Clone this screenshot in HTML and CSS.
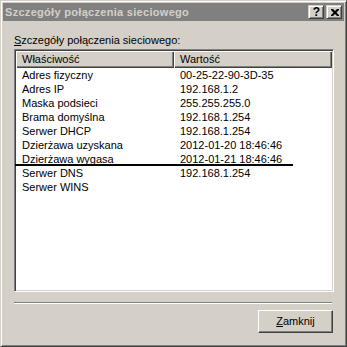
FILE: index.html
```html
<!DOCTYPE html>
<html lang="pl">
<head>
<meta charset="utf-8">
<title>Szczegóły połączenia sieciowego</title>
<link rel="stylesheet" href="styles.css">
</head>
<body>
<div class="window">
  <div class="titlebar">
    <span class="title">Szczegóły połączenia sieciowego</span>
    <div class="tbtns">
      <div class="tb tb-help">?</div>
      <div class="tb tb-close">
        <svg width="8" height="7" viewBox="0 0 8 7"><path d="M0 0h2l2 2 2-2h2v1l-2.5 2.5L8 6v1H6L4 5 2 7H0V6l2.5-2.5L0 1z" fill="#000"/></svg>
      </div>
    </div>
  </div>
  <div class="content">
    <div class="label"><u>S</u>zczegóły połączenia sieciowego:</div>
    <div class="list">
      <div class="header">
        <div class="hcell">Właściwość</div>
        <div class="hcell">Wartość</div>
      </div>
      <div class="rows">
        <div class="row"><span>Adres fizyczny</span><span>00-25-22-90-3D-35</span></div>
        <div class="row"><span>Adres IP</span><span>192.168.1.2</span></div>
        <div class="row"><span>Maska podsieci</span><span>255.255.255.0</span></div>
        <div class="row"><span>Brama domyślna</span><span>192.168.1.254</span></div>
        <div class="row"><span>Serwer DHCP</span><span>192.168.1.254</span></div>
        <div class="row"><span>Dzierżawa uzyskana</span><span>2012-01-20 18:46:46</span></div>
        <div class="row marked"><span>Dzierżawa wygasa</span><span>2012-01-21 18:46:46</span></div>
        <div class="row"><span>Serwer DNS</span><span>192.168.1.254</span></div>
        <div class="row"><span>Serwer WINS</span><span></span></div>
      </div>
    </div>
    <div class="sep"></div>
    <div class="footer">
      <div class="btn"><u>Z</u>amknij</div>
    </div>
  </div>
</div>
</body>
</html>
```

FILE: styles.css
```css
html, body {
  margin: 0;
  padding: 0;
  background: #d4d0c8;
}
body {
  font-family: "Liberation Sans", Arial, sans-serif;
  font-size: 11px;
  color: #000;
}
.window {
  box-sizing: border-box;
  width: 347px;
  height: 347px;
  background: #d4d0c8;
  border: 1px solid;
  border-color: #d4d0c8 #404040 #404040 #d4d0c8;
  box-shadow: inset 1px 1px #ffffff, inset -1px -1px #808080;
  padding: 2px;
  display: flex;
  flex-direction: column;
}
.titlebar {
  height: 18px;
  background: #808080;
  display: flex;
  align-items: center;
  justify-content: space-between;
  padding: 0 2px 0 2px;
}
.title {
  color: #d4d0c8;
  font-weight: bold;
  font-size: 11px;
  letter-spacing: 0.3px;
  line-height: 18px;
  white-space: nowrap;
}
.tbtns {
  display: flex;
  gap: 2px;
}
.tb {
  box-sizing: border-box;
  width: 16px;
  height: 14px;
  background: #d4d0c8;
  border: 1px solid;
  border-color: #d4d0c8 #404040 #404040 #d4d0c8;
  box-shadow: inset 1px 1px #ffffff, inset -1px -1px #808080;
  display: flex;
  align-items: center;
  justify-content: center;
}
.tb-help {
  font-weight: bold;
  font-size: 12px;
  line-height: 12px;
  padding-left: 1px;
}
.tb-close svg {
  display: block;
  margin-left: 1px;
}
.content {
  flex: 1;
  padding: 0 11px;
  display: flex;
  flex-direction: column;
}
.label {
  margin-top: 13px;
  line-height: 13px;
  white-space: nowrap;
}
.list {
  box-sizing: border-box;
  margin-top: 2px;
  width: 320px;
  height: 243px;
  background: #fff;
  border: 1px solid;
  border-color: #808080 #ffffff #ffffff #808080;
  box-shadow: inset 1px 1px #404040, inset -1px -1px #d4d0c8;
  padding: 1px;
  overflow: hidden;
}
.header {
  display: grid;
  grid-template-columns: 158px 158px;
}
.hcell {
  box-sizing: border-box;
  height: 17px;
  background: #d4d0c8;
  box-shadow: inset 1px 1px #ffffff, inset -1px -1px #404040, inset -2px -2px #808080;
  padding-left: 6px;
  line-height: 17px;
  white-space: nowrap;
}
.row {
  display: grid;
  grid-template-columns: 158px 158px;
  height: 14px;
  line-height: 14px;
  white-space: nowrap;
  position: relative;
}
.row span {
  padding-left: 6px;
}
.row.marked::after {
  content: "";
  position: absolute;
  left: -1px;
  top: 12px;
  width: 278px;
  height: 2px;
  background: #000;
}
.sep {
  margin-top: 10px;
  width: 318px;
  height: 1px;
  background: #808080;
  border-bottom: 1px solid #ffffff;
}
.footer {
  display: flex;
  justify-content: flex-end;
  margin-top: 6px;
}
.btn {
  box-sizing: border-box;
  width: 75px;
  height: 23px;
  background: #d4d0c8;
  border: 1px solid;
  border-color: #ffffff #404040 #404040 #ffffff;
  box-shadow: inset -1px -1px #808080;
  display: flex;
  align-items: center;
  justify-content: center;
  line-height: 13px;
}
```
